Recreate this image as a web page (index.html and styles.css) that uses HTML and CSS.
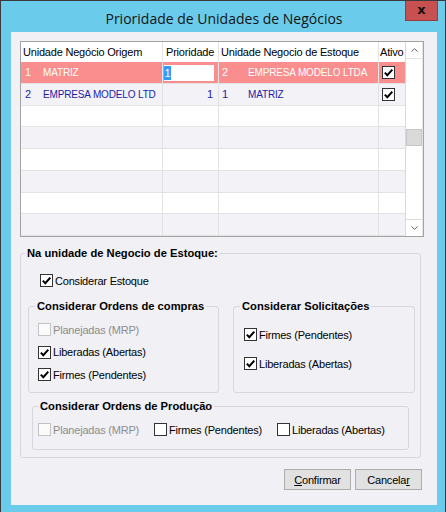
FILE: index.html
```html
<!DOCTYPE html>
<html lang="pt">
<head>
<meta charset="utf-8">
<title>Prioridade de Unidades de Negócios</title>
<link rel="stylesheet" href="styles.css">
</head>
<body>
<div class="window">
  <div class="titlebar">
    <span class="title">Prioridade de Unidades de Negócios</span>
    <span class="close">x</span>
  </div>
  <div class="client">
    <div class="grid">
      <div class="table">
        <div class="row head">
          <div class="c c1">Unidade Negócio Origem</div>
          <div class="c c2">Prioridade</div>
          <div class="c c3">Unidade Negocio de Estoque</div>
          <div class="c c4">Ativo</div>
        </div>
        <div class="row sel">
          <div class="c c1"><span class="code">1</span><span class="caps">MATRIZ</span></div>
          <div class="c c2"><div class="edit"><span class="hl">1</span></div></div>
          <div class="c c3"><span class="code3">2</span><span class="caps">EMPRESA MODELO LTDA</span></div>
          <div class="c c4"><span class="box"><svg viewBox="0 0 11 11" width="11" height="11"><path d="M1.8 5.6 L4.3 8.2 L9.3 2.6" fill="none" stroke="#000" stroke-width="2"/></svg></span></div>
        </div>
        <div class="row alt blue">
          <div class="c c1"><span class="code">2</span><span class="caps">EMPRESA MODELO LTD</span></div>
          <div class="c c2 num">1</div>
          <div class="c c3"><span class="code3">1</span><span class="caps">MATRIZ</span></div>
          <div class="c c4"><span class="box"><svg viewBox="0 0 11 11" width="11" height="11"><path d="M1.8 5.6 L4.3 8.2 L9.3 2.6" fill="none" stroke="#000" stroke-width="2"/></svg></span></div>
        </div>
        <div class="row"><div class="c c1"></div><div class="c c2"></div><div class="c c3"></div><div class="c c4"></div></div>
        <div class="row alt"><div class="c c1"></div><div class="c c2"></div><div class="c c3"></div><div class="c c4"></div></div>
        <div class="row"><div class="c c1"></div><div class="c c2"></div><div class="c c3"></div><div class="c c4"></div></div>
        <div class="row alt"><div class="c c1"></div><div class="c c2"></div><div class="c c3"></div><div class="c c4"></div></div>
        <div class="row"><div class="c c1"></div><div class="c c2"></div><div class="c c3"></div><div class="c c4"></div></div>
        <div class="row alt"><div class="c c1"></div><div class="c c2"></div><div class="c c3"></div><div class="c c4"></div></div>
      </div>
      <div class="vscroll">
        <div class="sb-btn up"><svg viewBox="0 0 7 4" width="7" height="4"><polyline points="0.5,3.5 3.5,0.7 6.5,3.5" fill="none" stroke="#606060" stroke-width="1"/></svg></div>
        <div class="sb-track"><div class="thumb"></div></div>
        <div class="sb-btn down"><svg viewBox="0 0 7 4" width="7" height="4"><polyline points="0.5,0.5 3.5,3.3 6.5,0.5" fill="none" stroke="#606060" stroke-width="1"/></svg></div>
      </div>
    </div>

    <fieldset class="grp main">
      <legend>Na unidade de Negocio de Estoque:</legend>
      <div class="chk estoque"><span class="box"><svg viewBox="0 0 11 11" width="11" height="11"><path d="M1.8 5.6 L4.3 8.2 L9.3 2.6" fill="none" stroke="#000" stroke-width="2"/></svg></span><span>Considerar Estoque</span></div>
      <div class="subrow">
        <fieldset class="grp sub left">
          <legend>Considerar Ordens de compras</legend>
          <div class="body">
            <div class="chk dis"><span class="box"></span><span>Planejadas (MRP)</span></div>
            <div class="chk"><span class="box"><svg viewBox="0 0 11 11" width="11" height="11"><path d="M1.8 5.6 L4.3 8.2 L9.3 2.6" fill="none" stroke="#000" stroke-width="2"/></svg></span><span>Liberadas (Abertas)</span></div>
            <div class="chk"><span class="box"><svg viewBox="0 0 11 11" width="11" height="11"><path d="M1.8 5.6 L4.3 8.2 L9.3 2.6" fill="none" stroke="#000" stroke-width="2"/></svg></span><span>Firmes (Pendentes)</span></div>
          </div>
        </fieldset>
        <fieldset class="grp sub right">
          <legend>Considerar Solicitações</legend>
          <div class="body">
            <div class="chk"><span class="box"><svg viewBox="0 0 11 11" width="11" height="11"><path d="M1.8 5.6 L4.3 8.2 L9.3 2.6" fill="none" stroke="#000" stroke-width="2"/></svg></span><span>Firmes (Pendentes)</span></div>
            <div class="chk"><span class="box"><svg viewBox="0 0 11 11" width="11" height="11"><path d="M1.8 5.6 L4.3 8.2 L9.3 2.6" fill="none" stroke="#000" stroke-width="2"/></svg></span><span>Liberadas (Abertas)</span></div>
          </div>
        </fieldset>
      </div>
      <fieldset class="grp sub prod">
        <legend>Considerar Ordens de Produção</legend>
        <div class="body">
          <div class="chk dis"><span class="box"></span><span>Planejadas (MRP)</span></div>
          <div class="chk"><span class="box"></span><span>Firmes (Pendentes)</span></div>
          <div class="chk"><span class="box"></span><span>Liberadas (Abertas)</span></div>
        </div>
      </fieldset>
    </fieldset>

    <div class="buttons">
      <button class="btn"><u>C</u>onfirmar</button>
      <button class="btn">Cancela<u>r</u></button>
    </div>
  </div>
</div>
</body>
</html>
```

FILE: styles.css
```css
* { box-sizing: border-box; }
html, body { margin: 0; padding: 0; }
body {
  width: 446px;
  height: 512px;
  overflow: hidden;
  background: #ffffff;
  font-family: "Liberation Sans", Arial, sans-serif;
  font-size: 11px;
  letter-spacing: -0.2px;
  color: #000;
}

.window {
  position: relative;
  width: 446px;
  height: 512px;
  background: #6bcbeb;
  border: 1px solid #3a3a3a;
  border-bottom: none;
  padding: 0 8px 7px 10px;
  display: flex;
  flex-direction: column;
}

.titlebar {
  height: 31px;
  padding-top: 8px;
  display: flex;
  justify-content: center;
  align-items: flex-start;
}
.title {
  font-family: "Open Sans", "Noto Sans", sans-serif;
  font-size: 14px;
  line-height: 20px;
  letter-spacing: 0;
  color: #141414;
}
.close {
  position: absolute;
  top: 0;
  right: 7px;
  width: 33px;
  height: 20px;
  background: #c75050;
  border: 1px solid #9b3b3b;
  border-top: none;
  display: flex;
  align-items: center;
  justify-content: center;
  font-family: "DejaVu Sans", sans-serif;
  font-weight: bold;
  font-size: 13px;
  line-height: 12px;
  letter-spacing: 0;
  color: #111;
  padding-bottom: 2px;
}

.client {
  flex: 1;
  background: #f0f0f5;
  padding: 9px 13px 0 9px;
  display: flex;
  flex-direction: column;
}

/* grid */
.grid {
  width: 404px;
  height: 196px;
  border: 1px solid #a3a3a3;
  background: #fff;
  display: flex;
  flex: none;
}
.table {
  width: 384px;
  overflow: hidden;
}
.row {
  display: grid;
  grid-template-columns: 142px 56px 160px 26px;
  height: 21.75px;
  border-bottom: 1px solid #e3e3e3;
  background: #fff;
}
.row.head { height: 20px; border-bottom: none; }
.row.alt { background: #f2f2f7; }
.row.sel { background: #fa8d8d; color: #fff; }
.row.blue { color: #1d1da6; }
.c {
  border-right: 1px solid #e3e3e3;
  display: flex;
  align-items: center;
  white-space: nowrap;
  overflow: hidden;
}
.c4 { border-right: none; }
.head .c1 { padding-left: 2px; }
.head .c2 { padding-left: 3px; }
.head .c3 { padding-left: 2px; }
.head .c4 { padding-left: 1px; }
.caps { font-size: 10px; letter-spacing: -0.15px; }
.row .code { width: 22px; padding-left: 4px; flex: none; }
.row .code3 { width: 29px; padding-left: 3px; flex: none; }
.c2.num { justify-content: flex-end; padding-right: 5px; }
.c4 .box { margin-left: 3px; }
.edit {
  flex: 1;
  align-self: stretch;
  margin: 3px 4px 2px 1px;
  background: #fff;
  display: flex;
  align-items: center;
}
.hl {
  background: #3399ff;
  color: #fff;
  line-height: 14px;
  padding: 0 0.5px;
}

.vscroll {
  width: 18px;
  border-left: 1px solid #d9d9d9;
  border-right: 1px solid #e6e6e6;
  display: flex;
  flex-direction: column;
  background: #fff;
}
.sb-btn {
  height: 17px;
  flex: none;
  display: flex;
  align-items: center;
  justify-content: center;
}
.sb-btn.up { border-bottom: 1px solid #e2e2e2; }
.sb-btn.down { border-top: 1px solid #dadada; }
.sb-track { flex: 1; }
.thumb {
  height: 17px;
  margin-top: 70px;
  background: #dadada;
  border: 1px solid #c6c6c6;
}

/* checkboxes */
.chk {
  display: flex;
  align-items: center;
  height: 15px;
  gap: 2px;
  white-space: nowrap;
}
.box {
  width: 13px;
  height: 13px;
  flex: none;
  border: 1px solid #333;
  background: #fff;
  display: flex;
  align-items: center;
  justify-content: center;
}
.chk.dis { color: #8d8d8d; }
.chk.dis .box { border-color: #c3c3c3; background: #fbfbfb; }

/* group boxes */
fieldset.grp {
  margin: 0;
  padding: 0;
  min-width: 0;
  border: 1px solid #d6d6dc;
  border-radius: 3px;
}
fieldset.grp > legend {
  padding: 0 2px;
  font-weight: bold;
  font-size: 11.2px;
  letter-spacing: 0;
  line-height: 13px;
  white-space: nowrap;
  color: #000;
}
fieldset.main {
  width: 401px;
  margin-top: 10px;
  padding-bottom: 7px;
  flex: none;
}
fieldset.main > legend { margin-left: 4px; }
.estoque { margin: 13px 0 0 19px; }
.subrow {
  display: flex;
  gap: 14px;
  margin: 12px 0 0 7px;
}
fieldset.left { width: 191px; }
fieldset.left > legend { margin-left: 6px; }
.left .body {
  padding: 9px 0 10px 9px;
  display: flex;
  flex-direction: column;
  gap: 7.5px;
}
fieldset.right { width: 182px; }
fieldset.right > legend { margin-left: 6px; }
.right .body {
  padding: 14px 0 0 10px;
  display: flex;
  flex-direction: column;
  gap: 14px;
}
fieldset.prod {
  width: 377px;
  margin: 7px 0 0 11px;
}
fieldset.prod > legend { margin-left: 5px; }
.prod .body {
  padding: 9px 0 12px 5px;
  display: grid;
  grid-template-columns: 116px 123px auto;
}

/* buttons */
.buttons {
  display: flex;
  justify-content: flex-end;
  gap: 4px;
  margin-top: 11px;
  padding-right: 2px;
}
.btn {
  width: 67px;
  height: 21px;
  padding: 0;
  background: #e1e1e1;
  border: 1px solid #adadad;
  border-radius: 0;
  font-family: "Liberation Sans", Arial, sans-serif;
  font-size: 11px;
  letter-spacing: -0.2px;
  color: #000;
}
```
